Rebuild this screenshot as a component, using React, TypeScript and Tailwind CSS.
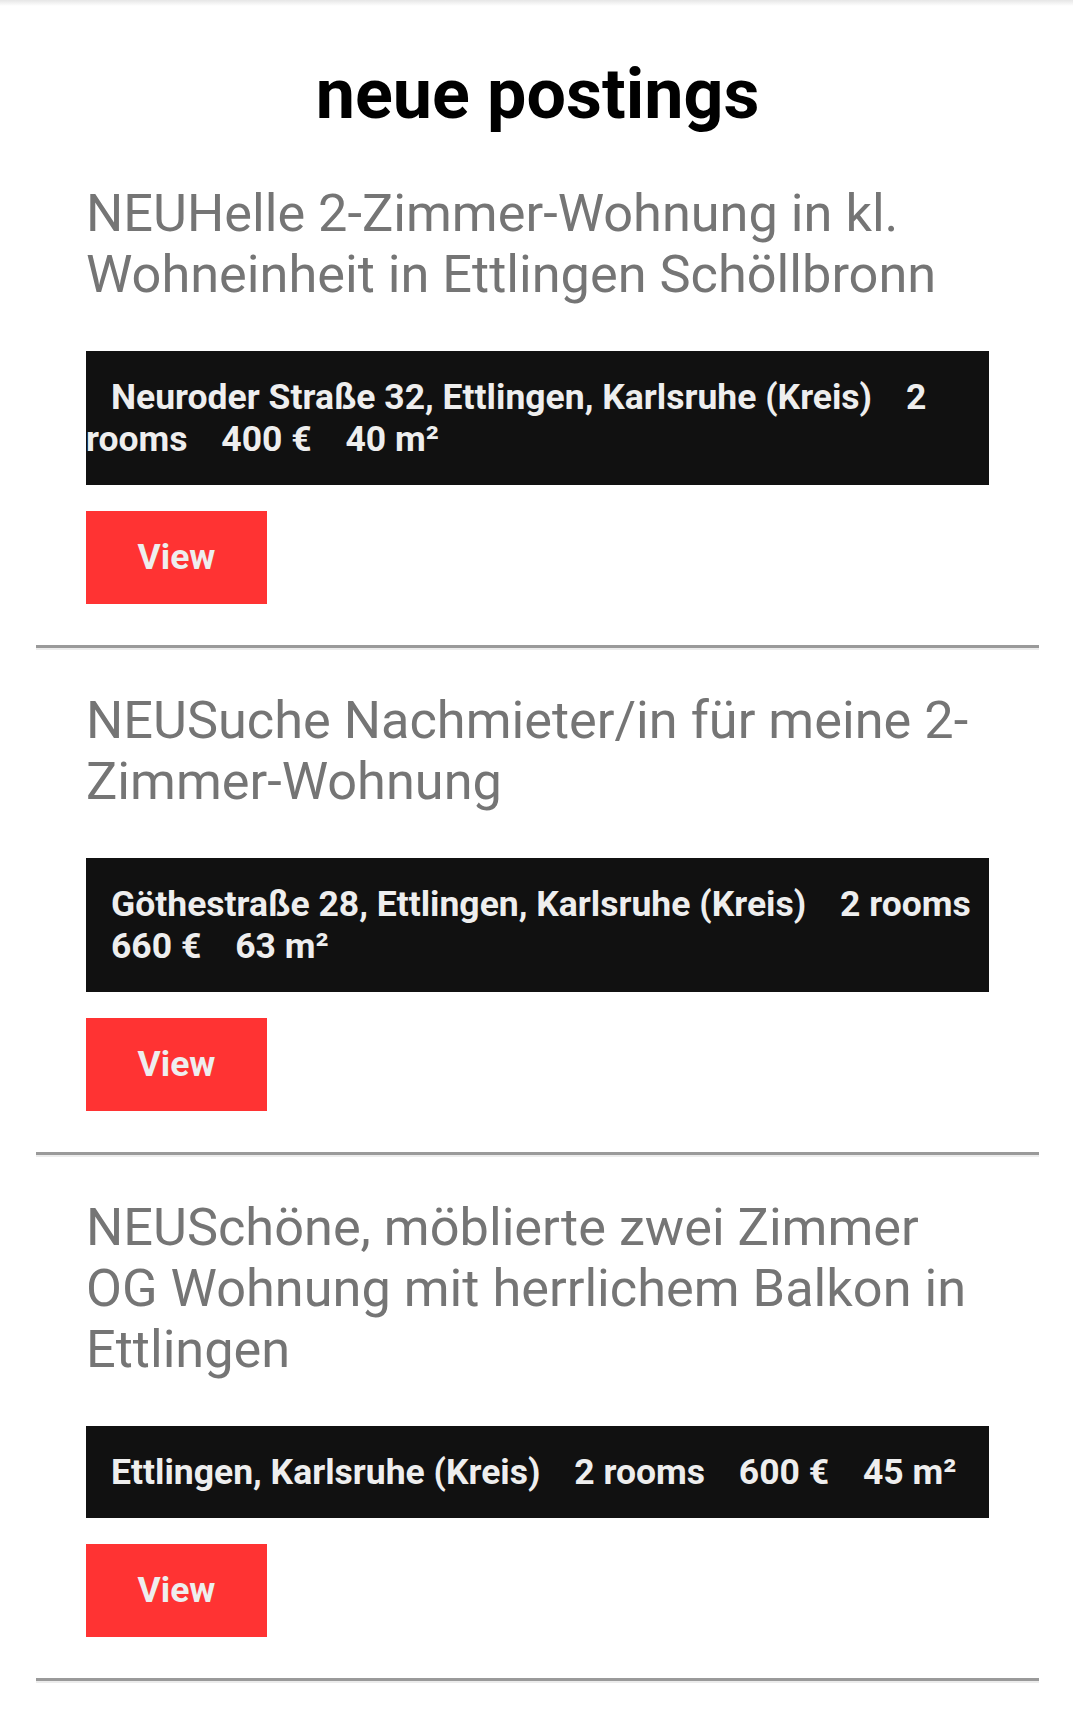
const postings = [
  {
    title: 'NEUHelle 2-Zimmer-Wohnung in kl. Wohneinheit in Ettlingen Schöllbronn',
    details: ['Neuroder Straße 32, Ettlingen, Karlsruhe (Kreis)', '2 rooms', '400 €', '40 m²'],
  },
  {
    title: 'NEUSuche Nachmieter/in für meine 2-Zimmer-Wohnung',
    details: ['Göthestraße 28, Ettlingen, Karlsruhe (Kreis)', '2 rooms', '660 €', '63 m²'],
  },
  {
    title: 'NEUSchöne, möblierte zwei Zimmer OG Wohnung mit herrlichem Balkon in Ettlingen',
    details: ['Ettlingen, Karlsruhe (Kreis)', '2 rooms', '600 €', '45 m²'],
  },
];

function PostingItem({ title, details }: { title: string; details: string[] }) {
  return (
    <div>
      <div className="px-[50px] pt-[40px] pb-[41px]">
        <h2 className="text-[52.3px] leading-[61px] font-normal text-[#757575]">{title}</h2>

        <p className="mt-[46px] bg-[#111111] py-[25px] text-[35.5px] leading-[42px] font-bold text-[#eeeeee]">
          {details.map((d, i) => (
            <span key={i}>
              {' '}
              <span className="ml-[25px]">{d}</span>
            </span>
          ))}
        </p>

        <button className="mt-[26px] flex h-[93px] w-[181px] items-center justify-center bg-[#ff3333] text-[35.5px] font-bold text-[#eeeeee]">
          View
        </button>
      </div>
      <div className="border-t-[3px] border-b-2 border-t-[#9a9a9a] border-b-[#ececec]" />
    </div>
  );
}

export default function App() {
  return (
    <div className="min-h-[1714px] bg-white font-['Roboto',sans-serif]">
      <div className="h-[6px] bg-gradient-to-b from-[#e6e6e6] to-white" />
      <div className="ml-[36px] mr-[34px]">
        <h1 className="mt-[47px] mb-[8px] text-center text-[70px] leading-[82px] font-bold text-black">
          neue postings
        </h1>
        {postings.map((p, i) => (
          <PostingItem key={i} title={p.title} details={p.details} />
        ))}
      </div>
    </div>
  );
}
